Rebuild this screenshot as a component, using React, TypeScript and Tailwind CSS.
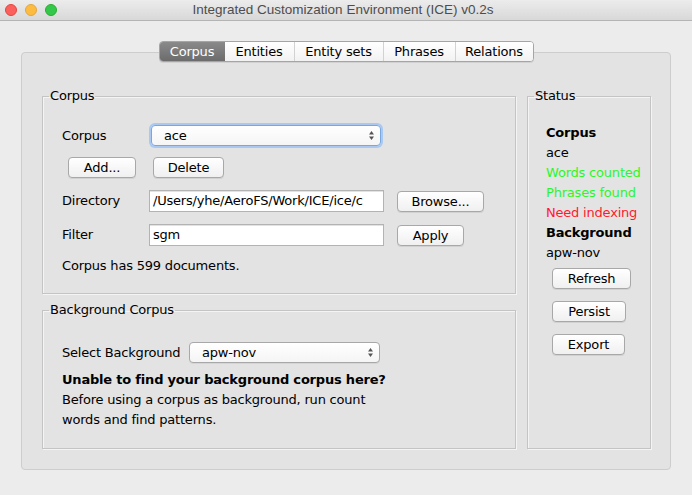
const font = { fontFamily: '"DejaVu Sans", Verdana, sans-serif' };

const tabs = ['Corpus', 'Entities', 'Entity sets', 'Phrases', 'Relations'];

function MacButton({ label, className = '' }: { label: string; className?: string }) {
  return (
    <button
      className={`h-[21px] rounded-[4px] border border-[#a8a8a8] bg-gradient-to-b from-white to-[#f0f0f0] text-[13px] leading-none text-black shadow-[0_1px_0_rgba(0,0,0,0.08)] ${className}`}
    >
      {label}
    </button>
  );
}

function Chevrons() {
  return (
    <svg width="7" height="11" viewBox="0 0 7 11" className="shrink-0">
      <path d="M3.5 1 L6 4.5 H1 Z" fill="#555" />
      <path d="M3.5 10 L6 6.5 H1 Z" fill="#555" />
    </svg>
  );
}

function Combo({ value, focused, className = '' }: { value: string; focused?: boolean; className?: string }) {
  return (
    <div
      className={`flex h-[21px] items-center justify-between rounded-[4px] border bg-gradient-to-b from-white to-[#f5f5f5] pl-[12px] pr-[5px] text-[13px] ${
        focused
          ? 'border-[#7aa7e0] shadow-[0_0_0_2px_#a9c8f2]'
          : 'border-[#a8a8a8] shadow-[0_1px_0_rgba(0,0,0,0.06)]'
      } ${className}`}
    >
      <span>{value}</span>
      <Chevrons />
    </div>
  );
}

function Field({ value, className = '' }: { value: string; className?: string }) {
  return (
    <div
      className={`flex h-[22px] items-center overflow-hidden whitespace-nowrap border border-[#b3b3b3] bg-white pl-[3px] text-[13px] shadow-[inset_0_1px_0_#e2e2e2] ${className}`}
    >
      {value}
    </div>
  );
}

function Group({ title, className = '', children }: { title: string; className?: string; children: React.ReactNode }) {
  return (
    <fieldset className={`border border-[#c4c4c4] shadow-[1px_1px_0_#f4f4f4,inset_1px_1px_0_#f4f4f4] ${className}`}>
      <legend className="ml-[6px] px-[1px] text-[13px] leading-[14px] text-black">{title}</legend>
      {children}
    </fieldset>
  );
}

export default function App() {
  return (
    <div
      className="flex h-[495px] w-[692px] flex-col overflow-hidden bg-[#ececec] tracking-[-0.2px] text-black"
      style={font}
    >
      {/* title bar */}
      <div className="relative flex h-[21px] shrink-0 items-center border-b border-[#b4b4b4] bg-gradient-to-b from-[#ececec] to-[#d8d8d8]">
        <div className="flex items-center gap-[8px] pl-[5px]">
          <span className="h-[12px] w-[12px] rounded-full border border-[#e2463f] bg-[#fc605c]" />
          <span className="h-[12px] w-[12px] rounded-full border border-[#e1a73e] bg-[#fdbc40]" />
          <span className="h-[12px] w-[12px] rounded-full border border-[#2dac2f] bg-[#34c84a]" />
        </div>
        <div
          className="flex-1 pr-[63px] text-center text-[13.5px] tracking-normal text-[#4d4d4d]"
          style={{ fontFamily: '"Liberation Sans", Arial, sans-serif' }}
        >
          Integrated Customization Environment (ICE) v0.2s
        </div>
      </div>

      <div className="flex flex-1 flex-col px-[21px] pt-[20px]">
        {/* tabs */}
        <div className="relative z-10 flex justify-center">
          <div className="flex h-[21px] overflow-hidden rounded-[4px] border border-[#a5a5a5] bg-white text-[13px] shadow-[0_1px_0_rgba(0,0,0,0.08)]">
            {tabs.map((t, i) => (
              <div
                key={t}
                className={`flex items-center justify-center ${
                  i === 0
                    ? 'w-[65px] bg-gradient-to-b from-[#8a8a8a] to-[#6c6c6c] text-white'
                    : 'border-l border-[#d2d2d2] bg-gradient-to-b from-white to-[#f2f2f2]'
                } ${i === 1 ? 'w-[69px] border-l-0' : ''} ${i === 2 ? 'w-[89px]' : ''} ${i === 3 ? 'w-[72px]' : ''} ${
                  i === 4 ? 'w-[78px]' : ''
                }`}
              >
                {t}
              </div>
            ))}
          </div>
        </div>

        {/* panel */}
        <div className="-mt-[10px] mb-[25px] flex flex-1 gap-[11px] rounded-[4px] border border-[#cdcdcd] bg-[#e3e3e3] pb-[20px] pl-[20px] pr-[19px] pt-[36px]">
          <div className="flex w-[474px] shrink-0 flex-col gap-[9px]">
            <Group title="Corpus" className="h-[205px]">
              <div className="flex flex-col pl-[19px] pt-[22px] text-[13px]">
                <div className="flex items-center">
                  <span className="w-[89px]">Corpus</span>
                  <Combo value="ace" focused className="w-[230px]" />
                </div>
                <div className="mt-[11px] flex gap-[17px] pl-[6px]">
                  <MacButton label="Add..." className="w-[68px]" />
                  <MacButton label="Delete" className="w-[71px]" />
                </div>
                <div className="mt-[12px] flex items-center">
                  <span className="w-[87px]">Directory</span>
                  <Field value="/Users/yhe/AeroFS/Work/ICE/ice/c" className="w-[235px]" />
                  <MacButton label="Browse..." className="ml-[13px] w-[87px]" />
                </div>
                <div className="mt-[12px] flex items-center">
                  <span className="w-[87px]">Filter</span>
                  <Field value="sgm" className="w-[235px]" />
                  <MacButton label="Apply" className="ml-[13px] w-[67px]" />
                </div>
                <div className="mt-[10px]">Corpus has 599 documents.</div>
              </div>
            </Group>
            <Group title="Background Corpus" className="flex-1">
              <div className="flex flex-col pl-[19px] pt-[25px] text-[13px]">
                <div className="flex items-center">
                  <span className="w-[127px]">Select Background</span>
                  <Combo value="apw-nov" className="w-[191px]" />
                </div>
                <div className="mt-[7px] font-bold leading-[20px]">Unable to find your background corpus here?</div>
                <div className="w-[330px] leading-[20px]">
                  Before using a corpus as background, run count words and find patterns.
                </div>
              </div>
            </Group>
          </div>

          <Group title="Status" className="w-[124px]">
            <div className="flex flex-col pl-[18px] pt-[20px] text-[13px] leading-[20px]">
              <span className="font-bold">Corpus</span>
              <span>ace</span>
              <span className="text-[#2cf52c]">Words counted</span>
              <span className="text-[#2cf52c]">Phrases found</span>
              <span className="text-[#ff1a2e]">Need indexing</span>
              <span className="font-bold">Background</span>
              <span>apw-nov</span>
              <div className="mt-[5px] flex flex-col items-start gap-[12px] pl-[6px]">
                <MacButton label="Refresh" className="w-[79px]" />
                <MacButton label="Persist" className="w-[74px]" />
                <MacButton label="Export" className="w-[73px]" />
              </div>
            </div>
          </Group>
        </div>
      </div>
    </div>
  );
}
